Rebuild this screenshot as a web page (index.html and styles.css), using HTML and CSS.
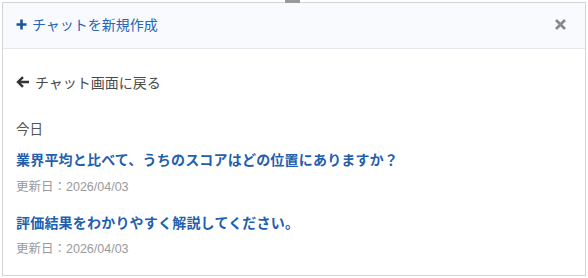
FILE: index.html
```html
<!DOCTYPE html>
<html lang="ja">
<head>
<meta charset="utf-8">
<link rel="stylesheet" href="styles.css">
</head>
<body>
<div class="handle"></div>
<div class="panel">
  <div class="header">
    <a class="new-chat">
      <svg class="plus" width="11" height="11" viewBox="0 0 11 11"><path d="M5.5 0.5v10M0.5 5.5h10" stroke="currentColor" stroke-width="2.6"/></svg>
      <span>チャットを新規作成</span>
    </a>
    <svg class="close" width="11" height="11" viewBox="0 0 11 11"><path d="M1 1l9 9M10 1l-9 9" stroke="currentColor" stroke-width="2.8"/></svg>
  </div>
  <div class="body">
    <a class="back">
      <svg class="arrow" width="14" height="12" viewBox="0 0 14 12"><path d="M13 6H2.5M7 1.2L2 6l5 4.8" fill="none" stroke="currentColor" stroke-width="2.4"/></svg>
      <span>チャット画面に戻る</span>
    </a>
    <div class="day">今日</div>
    <div class="item">
      <div class="title">業界平均と比べて、うちのスコアはどの位置にありますか？</div>
      <div class="date">更新日：2026/04/03</div>
    </div>
    <div class="item">
      <div class="title">評価結果をわかりやすく解説してください。</div>
      <div class="date">更新日：2026/04/03</div>
    </div>
  </div>
</div>
</body>
</html>
```
FILE: styles.css
```css
html, body {
  margin: 0;
  padding: 0;
  background: #ffffff;
}
body {
  width: 588px;
  height: 278px;
  position: relative;
  font-family: "Noto Sans CJK JP", "Noto Sans", sans-serif;
  overflow: hidden;
}
.handle {
  position: absolute;
  left: 285px;
  top: 0;
  width: 15px;
  height: 3px;
  background: #9a9a9a;
}
.panel {
  margin: 2px 2px 0 2px;
  height: 272px;
  border: 1px solid #d4d4d4;
  background: #fff;
  display: flex;
  flex-direction: column;
}
.header {
  height: 42px;
  background: #f9fafd;
  border-bottom: 1px solid #e6e8ee;
  display: flex;
  align-items: center;
  justify-content: space-between;
  padding: 0 19px 3px 13px;
}
.new-chat {
  color: #2565b3;
  font-size: 14px;
  display: flex;
  align-items: center;
  gap: 5px;
}
.plus { color: #1b55a0; }
.close { color: #8a8a8a; }
.body {
  padding: 21px 13px 0 13px;
  display: flex;
  flex-direction: column;
}
.back {
  color: #4a4a4a;
  font-size: 14px;
  display: flex;
  align-items: center;
  gap: 5px;
  height: 24px;
}
.arrow { color: #333; }
.day {
  margin-top: 24px;
  color: #555;
  font-size: 13.5px;
  line-height: 20px;
}
.item {
  margin-top: 10px;
}
.item + .item { margin-top: 15px; }
.title {
  color: #1f5fae;
  font-weight: bold;
  font-size: 14px;
  line-height: 22px;
  letter-spacing: 0.2px;
}
.date {
  margin-top: 8px;
  color: #9a9a9a;
  font-size: 12.5px;
  line-height: 18px;
  font-family: "Liberation Sans", "Noto Sans CJK JP", sans-serif;
}
.item + .item .date { margin-top: 7px; }
```
